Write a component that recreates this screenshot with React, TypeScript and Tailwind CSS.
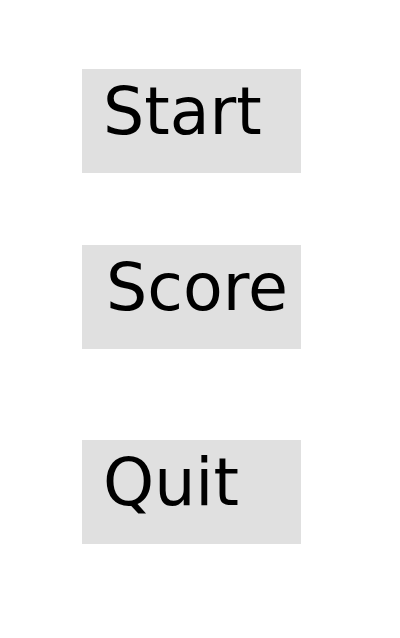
const items = [
    { label: 'Start', className: 'mt-[69px] pl-[21px]' },
    { label: 'Score', className: 'mt-[72px] pl-[24px]' },
    { label: 'Quit', className: 'mt-[91px] pl-[21px]' },
];

export default function App() {
    return (
        <div className="w-[400px] h-[638px] bg-white overflow-hidden" style={{ fontFamily: '"DejaVu Sans", Verdana, sans-serif' }}>
            {items.map(item => (
                <div
                    key={item.label}
                    className={`ml-[82px] w-[219px] h-[104px] bg-[#e0e0e0] pt-[6px] text-[65px] leading-[74px] text-black ${item.className}`}
                >
                    {item.label}
                </div>
            ))}
        </div>
    );
}
